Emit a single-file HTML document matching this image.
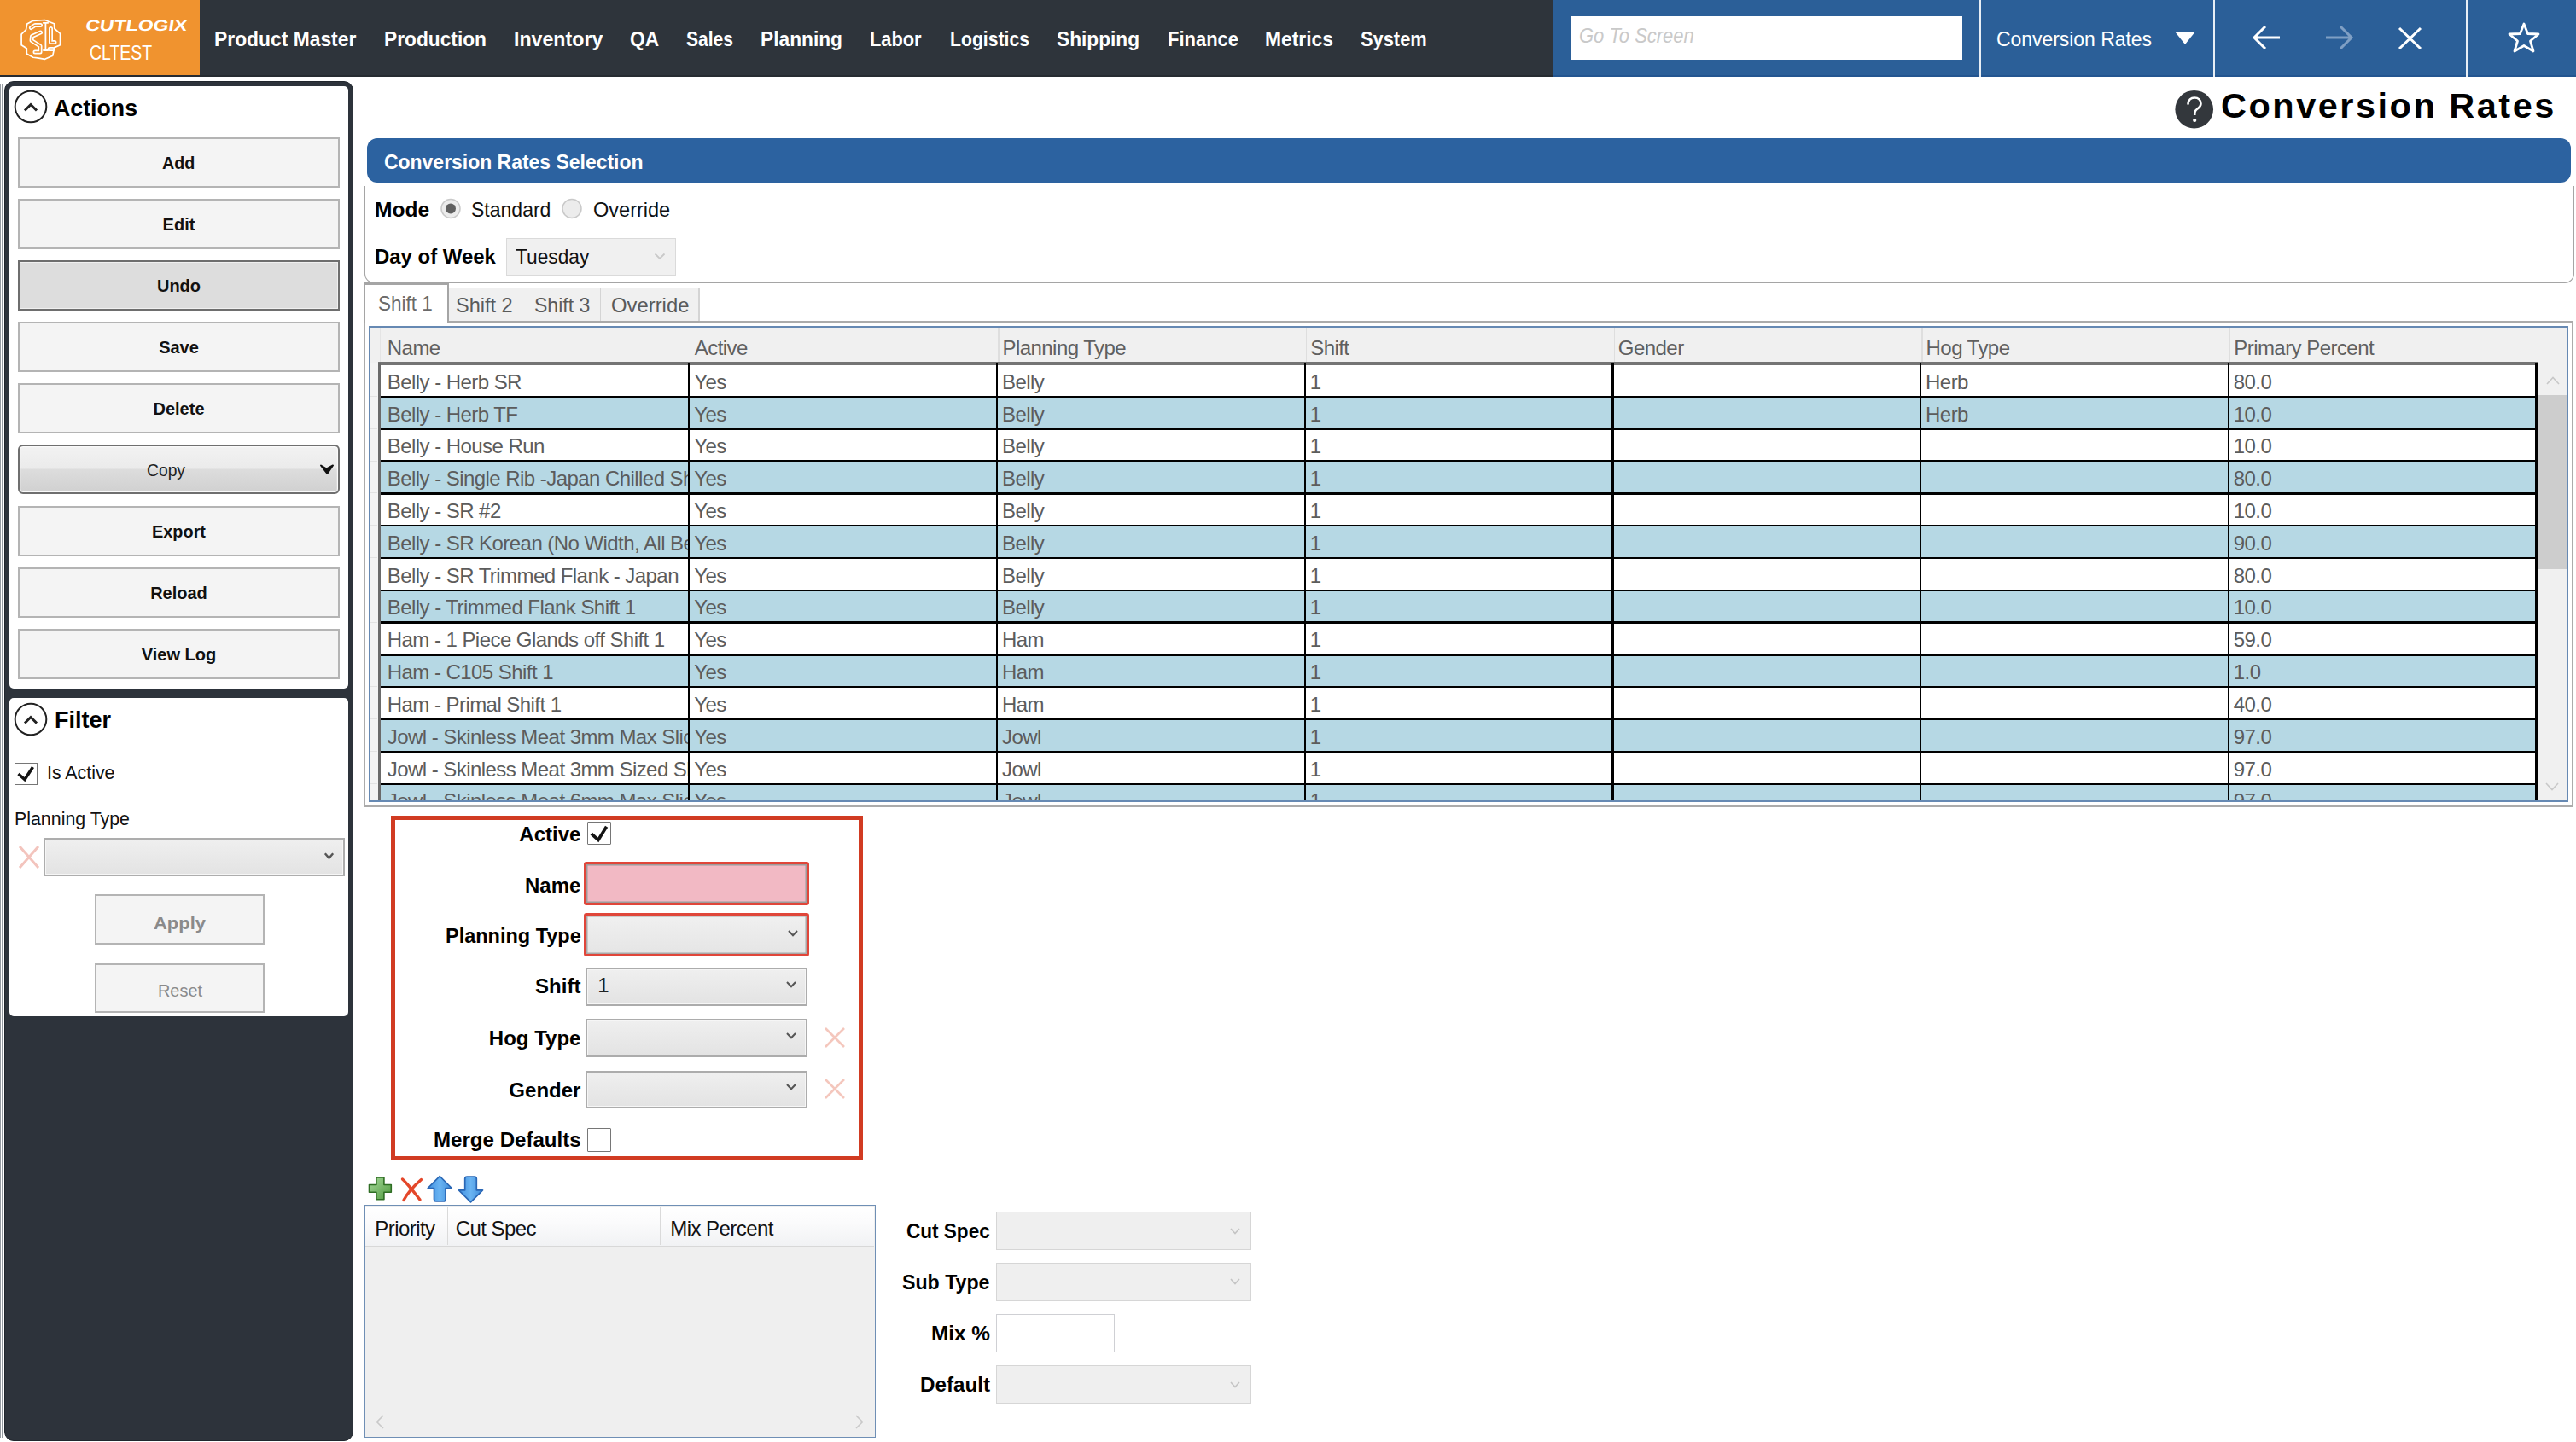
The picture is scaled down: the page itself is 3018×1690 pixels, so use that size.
<!DOCTYPE html><html><head><meta charset='utf-8'><title>Conversion Rates</title><style>
*{margin:0;padding:0;box-sizing:border-box}
html,body{width:3018px;height:1690px;overflow:hidden;background:#fff}
body{position:relative;font-family:'Liberation Sans',sans-serif}
body>div{position:absolute}
svg{position:absolute}
</style></head><body>
<div style="left:0px;top:0px;width:234px;height:90px;background:#f0932f"></div>
<div style="left:234px;top:0px;width:1586px;height:90px;background:#2e343b"></div>
<div style="left:1820px;top:0px;width:1198px;height:90px;background:#2b5f98"></div>
<div style="left:1820px;top:88px;width:1198px;height:2px;background:#235590"></div>
<div style="left:0px;top:88px;width:1820px;height:2px;background:#262b31"></div>
<div style="left:2319px;top:0px;width:2px;height:90px;background:#e8eef5"></div>
<div style="left:2593px;top:0px;width:2px;height:90px;background:#e8eef5"></div>
<div style="left:2889px;top:0px;width:2px;height:90px;background:#e8eef5"></div>
<svg style="left:0px;top:0px" width="80" height="80" fill="none" stroke-linejoin="round" stroke-linecap="round">
<path d="M52.6 23.5 L56.75 25.2 L63.4 27.7 L63.8 33.5 L70.5 39.3 L70.5 52.7 L63.8 55.6 L61.75 65.2 L52.6 69.3 L44 67.8 L38.8 67.25 L31.3 63.1 L31.3 56.8 L25.1 52.7 L25.1 40.2 L30.5 34.75 L31.75 28.1 L38.8 24.3 Z" stroke="#fff" stroke-width="1.7"/>
<path d="M53.4 27.5 V58.5 M50.8 26.8 H56.2 M51 59 H56" stroke="#fff" stroke-width="1.8"/>
<path d="M47.5 29.5 L41 29.5 L36.5 32.5 M47.5 38 L37.5 42.5 L37 47.5 L47 54 L47 61 L41 61" stroke="#fff" stroke-width="5"/>
<path d="M47.5 29.5 L41 29.5 L36.5 32.5 M47.5 38 L37.5 42.5 L37 47.5 L47 54 L47 61 L41 61" stroke="#f0932f" stroke-width="1.6"/>
<path d="M59.5 33.5 V49.5 H64 M58 57.5 H62" stroke="#fff" stroke-width="5"/>
<path d="M59.5 33.5 V49.5 H64 M58 57.5 H62" stroke="#f0932f" stroke-width="1.6"/>
</svg>
<div style="position:absolute;left:98.50px;top:20.96px;font-family:'Liberation Sans',sans-serif;font-size:18px;line-height:18px;font-weight:700;font-style:normal;color:#fff;white-space:pre;letter-spacing:0px;transform:scaleX(1.2796) skewX(-7deg);transform-origin:0 100%;-webkit-text-stroke:0px">CUTLOGIX</div>
<div style="position:absolute;left:104.80px;top:49.58px;font-family:'Liberation Sans',sans-serif;font-size:24px;line-height:24px;font-weight:400;font-style:normal;color:#fff;white-space:pre;letter-spacing:0px;transform:scaleX(0.8112);transform-origin:0 0;">CLTEST</div>
<div style="position:absolute;left:251.00px;top:33.98px;font-family:'Liberation Sans',sans-serif;font-size:24px;line-height:24px;font-weight:700;font-style:normal;color:#fff;white-space:pre;letter-spacing:0px;transform:scaleX(0.9519);transform-origin:0 0;">Product Master</div>
<div style="position:absolute;left:449.60px;top:33.98px;font-family:'Liberation Sans',sans-serif;font-size:24px;line-height:24px;font-weight:700;font-style:normal;color:#fff;white-space:pre;letter-spacing:0px;transform:scaleX(0.9474);transform-origin:0 0;">Production</div>
<div style="position:absolute;left:601.70px;top:33.98px;font-family:'Liberation Sans',sans-serif;font-size:24px;line-height:24px;font-weight:700;font-style:normal;color:#fff;white-space:pre;letter-spacing:0px;transform:scaleX(0.9655);transform-origin:0 0;">Inventory</div>
<div style="position:absolute;left:738.00px;top:33.98px;font-family:'Liberation Sans',sans-serif;font-size:24px;line-height:24px;font-weight:700;font-style:normal;color:#fff;white-space:pre;letter-spacing:0px;transform:scaleX(0.9444);transform-origin:0 0;">QA</div>
<div style="position:absolute;left:804.00px;top:33.98px;font-family:'Liberation Sans',sans-serif;font-size:24px;line-height:24px;font-weight:700;font-style:normal;color:#fff;white-space:pre;letter-spacing:0px;transform:scaleX(0.8769);transform-origin:0 0;">Sales</div>
<div style="position:absolute;left:891.00px;top:33.98px;font-family:'Liberation Sans',sans-serif;font-size:24px;line-height:24px;font-weight:700;font-style:normal;color:#fff;white-space:pre;letter-spacing:0px;transform:scaleX(0.9473);transform-origin:0 0;">Planning</div>
<div style="position:absolute;left:1019.40px;top:33.98px;font-family:'Liberation Sans',sans-serif;font-size:24px;line-height:24px;font-weight:700;font-style:normal;color:#fff;white-space:pre;letter-spacing:0px;transform:scaleX(0.9089);transform-origin:0 0;">Labor</div>
<div style="position:absolute;left:1113.00px;top:33.98px;font-family:'Liberation Sans',sans-serif;font-size:24px;line-height:24px;font-weight:700;font-style:normal;color:#fff;white-space:pre;letter-spacing:0px;transform:scaleX(0.8827);transform-origin:0 0;">Logistics</div>
<div style="position:absolute;left:1237.70px;top:33.98px;font-family:'Liberation Sans',sans-serif;font-size:24px;line-height:24px;font-weight:700;font-style:normal;color:#fff;white-space:pre;letter-spacing:0px;transform:scaleX(0.9449);transform-origin:0 0;">Shipping</div>
<div style="position:absolute;left:1367.50px;top:33.98px;font-family:'Liberation Sans',sans-serif;font-size:24px;line-height:24px;font-weight:700;font-style:normal;color:#fff;white-space:pre;letter-spacing:0px;transform:scaleX(0.9151);transform-origin:0 0;">Finance</div>
<div style="position:absolute;left:1482.00px;top:33.98px;font-family:'Liberation Sans',sans-serif;font-size:24px;line-height:24px;font-weight:700;font-style:normal;color:#fff;white-space:pre;letter-spacing:0px;transform:scaleX(0.9518);transform-origin:0 0;">Metrics</div>
<div style="position:absolute;left:1594.00px;top:33.98px;font-family:'Liberation Sans',sans-serif;font-size:24px;line-height:24px;font-weight:700;font-style:normal;color:#fff;white-space:pre;letter-spacing:0px;transform:scaleX(0.9099);transform-origin:0 0;">System</div>
<div style="left:1841px;top:19px;width:458px;height:51px;background:#fff"></div>
<div style="position:absolute;left:1850.00px;top:29.68px;font-family:'Liberation Sans',sans-serif;font-size:24px;line-height:24px;font-weight:400;font-style:italic;color:#c9c9c9;white-space:pre;letter-spacing:0px;transform:scaleX(0.9157);transform-origin:0 0;">Go To Screen</div>
<div style="position:absolute;left:2339.40px;top:33.98px;font-family:'Liberation Sans',sans-serif;font-size:24px;line-height:24px;font-weight:400;font-style:normal;color:#fff;white-space:pre;letter-spacing:0px;transform:scaleX(0.9541);transform-origin:0 0;">Conversion Rates</div>
<svg style="left:2546px;top:35px" width="28" height="20"><path d="M2 2 H26 L14 17 Z" fill="#fff"/></svg>
<svg style="left:2638px;top:28px" width="36" height="34" fill="none" stroke="#fff" stroke-width="3"><path d="M33 16 H4 M16 3 L3 16 L16 29"/></svg>
<svg style="left:2723px;top:28px" width="36" height="34" fill="none" stroke="#7f9fc4" stroke-width="3"><path d="M2 16 H31 M19 3 L32 16 L19 29"/></svg>
<svg style="left:2808px;top:30px" width="32" height="30" fill="none" stroke="#fff" stroke-width="3"><path d="M3 3 L28 27 M28 3 L3 27"/></svg>
<svg style="left:2938px;top:25px" width="40" height="38" fill="none" stroke="#fff" stroke-width="2.8" stroke-linejoin="round"><path d="M19 3 L23.5 14.5 L36 15 L26.5 23 L30 35 L19 28.5 L8 35 L11.5 23 L2 15 L14.5 14.5 Z"/></svg>
<div style="left:0px;top:99px;width:1.2px;height:1586px;background:#959ba1"></div>
<div style="left:2.4px;top:99px;width:1.2000000000000002px;height:1586px;background:#959ba1"></div>
<div style="left:4.8px;top:94.6px;width:409.2px;height:1594.4px;background:#2d333b;border:1.5px solid #20262d;border-radius:11px 11px 11px 11px"></div>
<div style="left:11px;top:101px;width:397px;height:706px;background:#fff;border-radius:5px"></div>
<div style="left:11px;top:818px;width:397px;height:373px;background:#fff;border-radius:5px"></div>
<svg style="left:15.5px;top:105px" width="40" height="40" fill="none" stroke="#222" ><circle cx="20" cy="20" r="18.3" stroke-width="2"/><path d="M13 24.5 L20 17.5 L27 24.5" stroke-width="3"/></svg>
<div style="position:absolute;left:63.00px;top:113.30px;font-family:'Liberation Sans',sans-serif;font-size:28px;line-height:28px;font-weight:700;font-style:normal;color:#000;white-space:pre;letter-spacing:0px;transform:scaleX(0.9544);transform-origin:0 0;">Actions</div>
<div style="left:21px;top:161px;width:377px;height:59px;border:2px solid #b4b4b4;background:#f4f4f4"></div>
<div style="position:absolute;left:190.30px;top:181.47px;font-family:'Liberation Sans',sans-serif;font-size:20px;line-height:20px;font-weight:700;font-style:normal;color:#111;white-space:pre;letter-spacing:0px;transform:scaleX(0.9874);transform-origin:0 0;">Add</div>
<div style="left:21px;top:233px;width:377px;height:59px;border:2px solid #b4b4b4;background:#f4f4f4"></div>
<div style="position:absolute;left:190.61px;top:253.47px;font-family:'Liberation Sans',sans-serif;font-size:20px;line-height:20px;font-weight:700;font-style:normal;color:#111;white-space:pre;letter-spacing:0px;">Edit</div>
<div style="left:21px;top:305px;width:377px;height:59px;border:2px solid #6e6e6e;background:#dddddd;box-shadow:inset 0 0 0 1px #f0f0f0"></div>
<div style="position:absolute;left:183.95px;top:325.47px;font-family:'Liberation Sans',sans-serif;font-size:20px;line-height:20px;font-weight:700;font-style:normal;color:#111;white-space:pre;letter-spacing:0px;">Undo</div>
<div style="left:21px;top:377px;width:377px;height:59px;border:2px solid #b4b4b4;background:#f4f4f4"></div>
<div style="position:absolute;left:186.14px;top:397.47px;font-family:'Liberation Sans',sans-serif;font-size:20px;line-height:20px;font-weight:700;font-style:normal;color:#111;white-space:pre;letter-spacing:0px;">Save</div>
<div style="left:21px;top:449px;width:377px;height:59px;border:2px solid #b4b4b4;background:#f4f4f4"></div>
<div style="position:absolute;left:179.48px;top:469.47px;font-family:'Liberation Sans',sans-serif;font-size:20px;line-height:20px;font-weight:700;font-style:normal;color:#111;white-space:pre;letter-spacing:0px;">Delete</div>
<div style="left:21px;top:521px;width:377px;height:58px;border:2px solid #6f6f6f;border-radius:6px;background:linear-gradient(#f2f2f2 0%,#ebebeb 48%,#dddddd 50%,#d0d0d0 100%);box-shadow:inset 0 0 0 1.2px #fafafa"></div>
<div style="position:absolute;left:171.50px;top:540.87px;font-family:'Liberation Sans',sans-serif;font-size:20px;line-height:20px;font-weight:400;font-style:normal;color:#222;white-space:pre;letter-spacing:0px;transform:scaleX(0.9635);transform-origin:0 0;">Copy</div>
<svg style="left:370px;top:540px" width="26" height="20"><path d="M6 5.5 L12.7 9.5 L20 5.5 L13.4 15 Z" fill="#111" stroke="#111" stroke-width="2" stroke-linejoin="round"/></svg>
<div style="left:21px;top:593px;width:377px;height:59px;border:2px solid #b4b4b4;background:#f4f4f4"></div>
<div style="position:absolute;left:178.00px;top:613.47px;font-family:'Liberation Sans',sans-serif;font-size:20px;line-height:20px;font-weight:700;font-style:normal;color:#111;white-space:pre;letter-spacing:0px;transform:scaleX(0.9946);transform-origin:0 0;">Export</div>
<div style="left:21px;top:665px;width:377px;height:59px;border:2px solid #b4b4b4;background:#f4f4f4"></div>
<div style="position:absolute;left:176.16px;top:685.47px;font-family:'Liberation Sans',sans-serif;font-size:20px;line-height:20px;font-weight:700;font-style:normal;color:#111;white-space:pre;letter-spacing:0px;">Reload</div>
<div style="left:21px;top:737px;width:377px;height:59px;border:2px solid #b4b4b4;background:#f4f4f4"></div>
<div style="position:absolute;left:165.79px;top:757.47px;font-family:'Liberation Sans',sans-serif;font-size:20px;line-height:20px;font-weight:700;font-style:normal;color:#111;white-space:pre;letter-spacing:0px;">View Log</div>
<svg style="left:15.5px;top:823px" width="40" height="40" fill="none" stroke="#222" ><circle cx="20" cy="20" r="18.3" stroke-width="2"/><path d="M13 24.5 L20 17.5 L27 24.5" stroke-width="3"/></svg>
<div style="position:absolute;left:64.00px;top:830.30px;font-family:'Liberation Sans',sans-serif;font-size:28px;line-height:28px;font-weight:700;font-style:normal;color:#000;white-space:pre;letter-spacing:0px;transform:scaleX(0.9639);transform-origin:0 0;">Filter</div>
<div style="left:16.6px;top:894px;width:27.4px;height:25.5px;border:1.8px solid #767676;background:#fff"></div>
<svg style="left:17px;top:894px" width="27" height="25"><path d="M4.5 13 L12 19.5 L21.5 5" fill="none" stroke="#141414" stroke-width="3.5"/></svg>
<div style="position:absolute;left:55.00px;top:895.08px;font-family:'Liberation Sans',sans-serif;font-size:22px;line-height:22px;font-weight:400;font-style:normal;color:#111;white-space:pre;letter-spacing:0px;transform:scaleX(0.9704);transform-origin:0 0;">Is Active</div>
<div style="position:absolute;left:17.00px;top:949.18px;font-family:'Liberation Sans',sans-serif;font-size:22px;line-height:22px;font-weight:400;font-style:normal;color:#111;white-space:pre;letter-spacing:0px;transform:scaleX(0.9709);transform-origin:0 0;">Planning Type</div>
<svg style="left:21px;top:990px" width="26" height="29" fill="none" stroke="#f3c4bd" stroke-width="3"><path d="M2 2 L24 27 M24 2 L2 27"/></svg>
<div style="left:51px;top:982px;width:353px;height:45px;border:2px solid #adadad;background:linear-gradient(#efefef,#e3e3e3);box-shadow:inset 0 0 0 1px #f6f6f6"></div>
<svg style="left:379px;top:998px" width="13" height="12"><path d="M1.8 2.2 L6.5 7.6 L11.2 2.2" fill="none" stroke="#565656" stroke-width="2.4"/></svg>
<div style="left:111px;top:1048px;width:199px;height:59px;border:2px solid #b4b4b4;background:#f4f4f4"></div>
<div style="position:absolute;left:180.00px;top:1071.57px;font-family:'Liberation Sans',sans-serif;font-size:20px;line-height:20px;font-weight:700;font-style:normal;color:#8a8a8a;white-space:pre;letter-spacing:0px;transform:scaleX(1.0979);transform-origin:0 0;">Apply</div>
<div style="left:111px;top:1128.7px;width:199px;height:58.299999999999955px;border:2px solid #b4b4b4;background:#f4f4f4"></div>
<div style="position:absolute;left:184.50px;top:1150.57px;font-family:'Liberation Sans',sans-serif;font-size:20px;line-height:20px;font-weight:400;font-style:normal;color:#8a8a8a;white-space:pre;letter-spacing:0px;transform:scaleX(0.9952);transform-origin:0 0;">Reset</div>
<svg style="left:2547px;top:105px" width="48" height="47"><circle cx="23.7" cy="23.2" r="22.3" fill="#33373c"/><path d="M16.5 17.5 C16.5 12 20 9.5 24 9.5 C28.5 9.5 31.5 12.5 31.5 16.5 C31.5 21 27 22 25 25 C24.3 26 24.2 27.5 24.2 30" fill="none" stroke="#fff" stroke-width="2.6"/><circle cx="24.2" cy="36" r="2.1" fill="#fff"/></svg>
<div style="position:absolute;left:2602.00px;top:103.17px;font-family:'Liberation Sans',sans-serif;font-size:41.5px;line-height:41.5px;font-weight:700;font-style:normal;color:#000;white-space:pre;letter-spacing:2.5px;">Conversion Rates</div>
<div style="left:430px;top:162px;width:2582px;height:52px;background:#2c62a0;border-radius:12px"></div>
<div style="position:absolute;left:450.30px;top:177.88px;font-family:'Liberation Sans',sans-serif;font-size:24px;line-height:24px;font-weight:700;font-style:normal;color:#fff;white-space:pre;letter-spacing:0px;transform:scaleX(0.9561);transform-origin:0 0;">Conversion Rates Selection</div>
<div style="left:426.5px;top:218px;width:2589.0px;height:113.5px;border:1.6px solid #a5a5a5;border-top:none;border-radius:0 0 11px 11px"></div>
<div style="position:absolute;left:439.40px;top:233.68px;font-family:'Liberation Sans',sans-serif;font-size:24px;line-height:24px;font-weight:700;font-style:normal;color:#000;white-space:pre;letter-spacing:0px;transform:scaleX(1.0244);transform-origin:0 0;">Mode</div>
<svg style="left:515px;top:232px" width="26" height="26"><circle cx="13" cy="12.5" r="11" fill="#ececec" stroke="#c9c9c9" stroke-width="1.5"/><circle cx="13" cy="12.5" r="6" fill="#606060"/></svg>
<div style="position:absolute;left:552.00px;top:233.68px;font-family:'Liberation Sans',sans-serif;font-size:24px;line-height:24px;font-weight:400;font-style:normal;color:#111;white-space:pre;letter-spacing:0px;transform:scaleX(0.9589);transform-origin:0 0;">Standard</div>
<svg style="left:657px;top:232px" width="26" height="26"><circle cx="13" cy="12.5" r="11" fill="#ececec" stroke="#c9c9c9" stroke-width="1.5"/></svg>
<div style="position:absolute;left:694.80px;top:233.68px;font-family:'Liberation Sans',sans-serif;font-size:24px;line-height:24px;font-weight:400;font-style:normal;color:#111;white-space:pre;letter-spacing:0px;transform:scaleX(0.9801);transform-origin:0 0;">Override</div>
<div style="position:absolute;left:439.40px;top:289.18px;font-family:'Liberation Sans',sans-serif;font-size:24px;line-height:24px;font-weight:700;font-style:normal;color:#000;white-space:pre;letter-spacing:0px;transform:scaleX(0.9966);transform-origin:0 0;">Day of Week</div>
<div style="left:592.5px;top:278.8px;width:199.10000000000002px;height:44.599999999999966px;background:#f0f0f0;border:1.5px solid #dadada"></div>
<div style="position:absolute;left:603.80px;top:289.18px;font-family:'Liberation Sans',sans-serif;font-size:24px;line-height:24px;font-weight:400;font-style:normal;color:#111;white-space:pre;letter-spacing:0px;transform:scaleX(0.9466);transform-origin:0 0;">Tuesday</div>
<svg style="left:765px;top:295px" width="16" height="11"><path d="M2.5 2.5 L8 8 L13.5 2.5" fill="none" stroke="#c9c9c9" stroke-width="1.8"/></svg>
<div style="left:426.4px;top:376px;width:2589.1px;height:569.6px;border:2px solid #ababab"></div>
<div style="left:525.5px;top:336.7px;width:86.29999999999995px;height:41.30000000000001px;background:#f0f0f0;border-top:1.6px solid #c9c9c9;border-bottom:2px solid #a9a9a9"></div>
<div style="left:610.5px;top:336.7px;width:2.599999999999909px;height:39.30000000000001px;background:#d4d4d4"></div>
<div style="position:absolute;left:533.70px;top:345.88px;font-family:'Liberation Sans',sans-serif;font-size:24px;line-height:24px;font-weight:400;font-style:normal;color:#5a5a5a;white-space:pre;letter-spacing:0px;transform:scaleX(0.9802);transform-origin:0 0;">Shift 2</div>
<div style="left:611.8px;top:336.7px;width:92.60000000000002px;height:41.30000000000001px;background:#f0f0f0;border-top:1.6px solid #c9c9c9;border-bottom:2px solid #a9a9a9"></div>
<div style="left:703.1px;top:336.7px;width:2.599999999999909px;height:39.30000000000001px;background:#d4d4d4"></div>
<div style="position:absolute;left:625.50px;top:345.88px;font-family:'Liberation Sans',sans-serif;font-size:24px;line-height:24px;font-weight:400;font-style:normal;color:#5a5a5a;white-space:pre;letter-spacing:0px;transform:scaleX(0.9596);transform-origin:0 0;">Shift 3</div>
<div style="left:704.4px;top:336.7px;width:114.39999999999998px;height:41.30000000000001px;background:#f0f0f0;border-top:1.6px solid #c9c9c9;border-bottom:2px solid #a9a9a9"></div>
<div style="left:817.5px;top:336.7px;width:2.599999999999909px;height:39.30000000000001px;background:#d4d4d4"></div>
<div style="position:absolute;left:715.60px;top:345.88px;font-family:'Liberation Sans',sans-serif;font-size:24px;line-height:24px;font-weight:400;font-style:normal;color:#5a5a5a;white-space:pre;letter-spacing:0px;transform:scaleX(0.9931);transform-origin:0 0;">Override</div>
<div style="left:426.4px;top:331.3px;width:100.0px;height:46.89999999999998px;background:#fff;border:2px solid #a5a5a5;border-bottom:none;border-top-width:3px"></div>
<div style="position:absolute;left:442.50px;top:343.98px;font-family:'Liberation Sans',sans-serif;font-size:24px;line-height:24px;font-weight:400;font-style:normal;color:#6a6a6a;white-space:pre;letter-spacing:0px;transform:scaleX(0.9361);transform-origin:0 0;">Shift 1</div>
<div style="left:432.3px;top:382px;width:2576.7px;height:558px;border:2px solid #6689b3;background:#fff"></div>
<div style="left:434.3px;top:384px;width:2572.7px;height:42px;background:#f0f0f0"></div>
<div style="left:444.5px;top:384px;width:1.5px;height:40px;background:#e4e4e4"></div>
<div style="position:absolute;left:453.80px;top:395.68px;font-family:'Liberation Sans',sans-serif;font-size:24px;line-height:24px;font-weight:400;font-style:normal;color:#606060;white-space:pre;letter-spacing:-0.55px;">Name</div>
<div style="position:absolute;left:813.80px;top:395.68px;font-family:'Liberation Sans',sans-serif;font-size:24px;line-height:24px;font-weight:400;font-style:normal;color:#606060;white-space:pre;letter-spacing:-0.55px;">Active</div>
<div style="left:808.5px;top:384px;width:1.3999999999999773px;height:40px;background:#dedede"></div>
<div style="position:absolute;left:1174.49px;top:395.68px;font-family:'Liberation Sans',sans-serif;font-size:24px;line-height:24px;font-weight:400;font-style:normal;color:#606060;white-space:pre;letter-spacing:-0.55px;">Planning Type</div>
<div style="left:1169.19px;top:384px;width:1.3999999999998636px;height:40px;background:#dedede"></div>
<div style="position:absolute;left:1535.18px;top:395.68px;font-family:'Liberation Sans',sans-serif;font-size:24px;line-height:24px;font-weight:400;font-style:normal;color:#606060;white-space:pre;letter-spacing:-0.55px;">Shift</div>
<div style="left:1529.8799999999999px;top:384px;width:1.3999999999998636px;height:40px;background:#dedede"></div>
<div style="position:absolute;left:1895.87px;top:395.68px;font-family:'Liberation Sans',sans-serif;font-size:24px;line-height:24px;font-weight:400;font-style:normal;color:#606060;white-space:pre;letter-spacing:-0.55px;">Gender</div>
<div style="left:1890.57px;top:384px;width:1.3999999999998636px;height:40px;background:#dedede"></div>
<div style="position:absolute;left:2256.56px;top:395.68px;font-family:'Liberation Sans',sans-serif;font-size:24px;line-height:24px;font-weight:400;font-style:normal;color:#606060;white-space:pre;letter-spacing:-0.55px;">Hog Type</div>
<div style="left:2251.2599999999998px;top:384px;width:1.400000000000091px;height:40px;background:#dedede"></div>
<div style="position:absolute;left:2617.25px;top:395.68px;font-family:'Liberation Sans',sans-serif;font-size:24px;line-height:24px;font-weight:400;font-style:normal;color:#606060;white-space:pre;letter-spacing:-0.55px;">Primary Percent</div>
<div style="left:2611.95px;top:384px;width:1.400000000000091px;height:40px;background:#dedede"></div>
<div style="left:434.3px;top:426px;width:8.699999999999989px;height:512px;background:#f3f3f3"></div>
<div style="left:2972.6px;top:426px;width:34.40000000000009px;height:512px;background:#f0f0f0"></div>
<div style="left:2974px;top:462.5px;width:32.5px;height:204.5px;background:#cdcdcd"></div>
<svg style="left:2982px;top:439px" width="18" height="14"><path d="M2 11 L9 3.5 L16 11" fill="none" stroke="#c8c8c8" stroke-width="1.6"/></svg>
<svg style="left:2981px;top:915px" width="18" height="14"><path d="M2 3 L9 10.5 L16 3" fill="none" stroke="#c8c8c8" stroke-width="1.6"/></svg>
<div style="left:434.3px;top:384px;width:2539.1px;height:554px;overflow:hidden"><div style="position:absolute;left:10.10px;top:41.75px;width:2527.04px;height:39.15px;background:#fff"></div><div style="position:absolute;left:0px;top:79.90px;width:8.10px;height:1px;background:#e2e2e2"></div><div style="position:absolute;left:10.10px;top:80.90px;width:2527.04px;height:37.82px;background:#b6d8e4"></div><div style="position:absolute;left:0px;top:117.72px;width:8.10px;height:1px;background:#e2e2e2"></div><div style="position:absolute;left:10.10px;top:118.72px;width:2527.04px;height:37.82px;background:#fff"></div><div style="position:absolute;left:0px;top:155.54px;width:8.10px;height:1px;background:#e2e2e2"></div><div style="position:absolute;left:10.10px;top:156.54px;width:2527.04px;height:37.82px;background:#b6d8e4"></div><div style="position:absolute;left:0px;top:193.36px;width:8.10px;height:1px;background:#e2e2e2"></div><div style="position:absolute;left:10.10px;top:194.36px;width:2527.04px;height:37.82px;background:#fff"></div><div style="position:absolute;left:0px;top:231.18px;width:8.10px;height:1px;background:#e2e2e2"></div><div style="position:absolute;left:10.10px;top:232.18px;width:2527.04px;height:37.82px;background:#b6d8e4"></div><div style="position:absolute;left:0px;top:269.00px;width:8.10px;height:1px;background:#e2e2e2"></div><div style="position:absolute;left:10.10px;top:270.00px;width:2527.04px;height:37.82px;background:#fff"></div><div style="position:absolute;left:0px;top:306.82px;width:8.10px;height:1px;background:#e2e2e2"></div><div style="position:absolute;left:10.10px;top:307.82px;width:2527.04px;height:37.82px;background:#b6d8e4"></div><div style="position:absolute;left:0px;top:344.64px;width:8.10px;height:1px;background:#e2e2e2"></div><div style="position:absolute;left:10.10px;top:345.64px;width:2527.04px;height:37.82px;background:#fff"></div><div style="position:absolute;left:0px;top:382.46px;width:8.10px;height:1px;background:#e2e2e2"></div><div style="position:absolute;left:10.10px;top:383.46px;width:2527.04px;height:37.82px;background:#b6d8e4"></div><div style="position:absolute;left:0px;top:420.28px;width:8.10px;height:1px;background:#e2e2e2"></div><div style="position:absolute;left:10.10px;top:421.28px;width:2527.04px;height:37.82px;background:#fff"></div><div style="position:absolute;left:0px;top:458.10px;width:8.10px;height:1px;background:#e2e2e2"></div><div style="position:absolute;left:10.10px;top:459.10px;width:2527.04px;height:37.82px;background:#b6d8e4"></div><div style="position:absolute;left:0px;top:495.92px;width:8.10px;height:1px;background:#e2e2e2"></div><div style="position:absolute;left:10.10px;top:496.92px;width:2527.04px;height:37.82px;background:#fff"></div><div style="position:absolute;left:0px;top:533.74px;width:8.10px;height:1px;background:#e2e2e2"></div><div style="position:absolute;left:10.10px;top:534.74px;width:2527.04px;height:37.82px;background:#b6d8e4"></div><div style="position:absolute;left:0px;top:571.56px;width:8.10px;height:1px;background:#e2e2e2"></div><div style="position:absolute;left:8.60px;top:40.00px;width:2529.74px;height:3.5px;background:#747474"></div><div style="position:absolute;left:8.60px;top:79.75px;width:2529.74px;height:2.3px;background:#000"></div><div style="position:absolute;left:8.60px;top:117.57px;width:2529.74px;height:2.3px;background:#000"></div><div style="position:absolute;left:8.60px;top:155.39px;width:2529.74px;height:2.3px;background:#000"></div><div style="position:absolute;left:8.60px;top:193.21px;width:2529.74px;height:2.3px;background:#000"></div><div style="position:absolute;left:8.60px;top:231.03px;width:2529.74px;height:2.3px;background:#000"></div><div style="position:absolute;left:8.60px;top:268.85px;width:2529.74px;height:2.3px;background:#000"></div><div style="position:absolute;left:8.60px;top:306.67px;width:2529.74px;height:2.3px;background:#000"></div><div style="position:absolute;left:8.60px;top:344.49px;width:2529.74px;height:2.3px;background:#000"></div><div style="position:absolute;left:8.60px;top:382.31px;width:2529.74px;height:2.3px;background:#000"></div><div style="position:absolute;left:8.60px;top:420.13px;width:2529.74px;height:2.3px;background:#000"></div><div style="position:absolute;left:8.60px;top:457.95px;width:2529.74px;height:2.3px;background:#000"></div><div style="position:absolute;left:8.60px;top:495.77px;width:2529.74px;height:2.3px;background:#000"></div><div style="position:absolute;left:8.60px;top:533.59px;width:2529.74px;height:2.3px;background:#000"></div><div style="position:absolute;left:8.60px;top:571.41px;width:2529.74px;height:2.3px;background:#000"></div><div style="position:absolute;left:8.50px;top:41.75px;width:3.2px;height:600px;background:#6a6a6a"></div><div style="position:absolute;left:371.85px;top:41.75px;width:2.3px;height:600px;background:#000"></div><div style="position:absolute;left:732.54px;top:41.75px;width:2.3px;height:600px;background:#000"></div><div style="position:absolute;left:1093.23px;top:41.75px;width:2.3px;height:600px;background:#000"></div><div style="position:absolute;left:1453.92px;top:41.75px;width:2.3px;height:600px;background:#000"></div><div style="position:absolute;left:1814.61px;top:41.75px;width:2.3px;height:600px;background:#000"></div><div style="position:absolute;left:2175.30px;top:41.75px;width:2.3px;height:600px;background:#000"></div><div style="position:absolute;left:2535.99px;top:41.75px;width:2.3px;height:600px;background:#000"></div></div>
<div style="left:445.59999999999997px;top:426px;width:360.50px;height:512.00px;overflow:hidden"><div style="position:absolute;left:8.20px;top:9.68px;font-family:'Liberation Sans',sans-serif;font-size:24px;line-height:24px;font-weight:400;font-style:normal;color:#5c5c5c;white-space:pre;letter-spacing:-0.55px;">Belly - Herb SR</div></div>
<div style="left:808.5px;top:426px;width:358.29px;height:512.00px;overflow:hidden"><div style="position:absolute;left:4.80px;top:9.68px;font-family:'Liberation Sans',sans-serif;font-size:24px;line-height:24px;font-weight:400;font-style:normal;color:#5c5c5c;white-space:pre;letter-spacing:-0.55px;">Yes</div></div>
<div style="left:1169.19px;top:426px;width:358.29px;height:512.00px;overflow:hidden"><div style="position:absolute;left:4.80px;top:9.68px;font-family:'Liberation Sans',sans-serif;font-size:24px;line-height:24px;font-weight:400;font-style:normal;color:#5c5c5c;white-space:pre;letter-spacing:-0.55px;">Belly</div></div>
<div style="left:1529.8799999999999px;top:426px;width:358.29px;height:512.00px;overflow:hidden"><div style="position:absolute;left:4.80px;top:9.68px;font-family:'Liberation Sans',sans-serif;font-size:24px;line-height:24px;font-weight:400;font-style:normal;color:#5c5c5c;white-space:pre;letter-spacing:-0.55px;">1</div></div>
<div style="left:2251.2599999999998px;top:426px;width:358.29px;height:512.00px;overflow:hidden"><div style="position:absolute;left:4.80px;top:9.68px;font-family:'Liberation Sans',sans-serif;font-size:24px;line-height:24px;font-weight:400;font-style:normal;color:#5c5c5c;white-space:pre;letter-spacing:-0.55px;">Herb</div></div>
<div style="left:2611.95px;top:426px;width:358.29px;height:512.00px;overflow:hidden"><div style="position:absolute;left:4.80px;top:9.68px;font-family:'Liberation Sans',sans-serif;font-size:24px;line-height:24px;font-weight:400;font-style:normal;color:#5c5c5c;white-space:pre;letter-spacing:-0.55px;">80.0</div></div>
<div style="left:445.59999999999997px;top:426px;width:360.50px;height:512.00px;overflow:hidden"><div style="position:absolute;left:8.20px;top:47.50px;font-family:'Liberation Sans',sans-serif;font-size:24px;line-height:24px;font-weight:400;font-style:normal;color:#5c5c5c;white-space:pre;letter-spacing:-0.55px;">Belly - Herb TF</div></div>
<div style="left:808.5px;top:426px;width:358.29px;height:512.00px;overflow:hidden"><div style="position:absolute;left:4.80px;top:47.50px;font-family:'Liberation Sans',sans-serif;font-size:24px;line-height:24px;font-weight:400;font-style:normal;color:#5c5c5c;white-space:pre;letter-spacing:-0.55px;">Yes</div></div>
<div style="left:1169.19px;top:426px;width:358.29px;height:512.00px;overflow:hidden"><div style="position:absolute;left:4.80px;top:47.50px;font-family:'Liberation Sans',sans-serif;font-size:24px;line-height:24px;font-weight:400;font-style:normal;color:#5c5c5c;white-space:pre;letter-spacing:-0.55px;">Belly</div></div>
<div style="left:1529.8799999999999px;top:426px;width:358.29px;height:512.00px;overflow:hidden"><div style="position:absolute;left:4.80px;top:47.50px;font-family:'Liberation Sans',sans-serif;font-size:24px;line-height:24px;font-weight:400;font-style:normal;color:#5c5c5c;white-space:pre;letter-spacing:-0.55px;">1</div></div>
<div style="left:2251.2599999999998px;top:426px;width:358.29px;height:512.00px;overflow:hidden"><div style="position:absolute;left:4.80px;top:47.50px;font-family:'Liberation Sans',sans-serif;font-size:24px;line-height:24px;font-weight:400;font-style:normal;color:#5c5c5c;white-space:pre;letter-spacing:-0.55px;">Herb</div></div>
<div style="left:2611.95px;top:426px;width:358.29px;height:512.00px;overflow:hidden"><div style="position:absolute;left:4.80px;top:47.50px;font-family:'Liberation Sans',sans-serif;font-size:24px;line-height:24px;font-weight:400;font-style:normal;color:#5c5c5c;white-space:pre;letter-spacing:-0.55px;">10.0</div></div>
<div style="left:445.59999999999997px;top:426px;width:360.50px;height:512.00px;overflow:hidden"><div style="position:absolute;left:8.20px;top:85.32px;font-family:'Liberation Sans',sans-serif;font-size:24px;line-height:24px;font-weight:400;font-style:normal;color:#5c5c5c;white-space:pre;letter-spacing:-0.55px;">Belly - House Run</div></div>
<div style="left:808.5px;top:426px;width:358.29px;height:512.00px;overflow:hidden"><div style="position:absolute;left:4.80px;top:85.32px;font-family:'Liberation Sans',sans-serif;font-size:24px;line-height:24px;font-weight:400;font-style:normal;color:#5c5c5c;white-space:pre;letter-spacing:-0.55px;">Yes</div></div>
<div style="left:1169.19px;top:426px;width:358.29px;height:512.00px;overflow:hidden"><div style="position:absolute;left:4.80px;top:85.32px;font-family:'Liberation Sans',sans-serif;font-size:24px;line-height:24px;font-weight:400;font-style:normal;color:#5c5c5c;white-space:pre;letter-spacing:-0.55px;">Belly</div></div>
<div style="left:1529.8799999999999px;top:426px;width:358.29px;height:512.00px;overflow:hidden"><div style="position:absolute;left:4.80px;top:85.32px;font-family:'Liberation Sans',sans-serif;font-size:24px;line-height:24px;font-weight:400;font-style:normal;color:#5c5c5c;white-space:pre;letter-spacing:-0.55px;">1</div></div>
<div style="left:2611.95px;top:426px;width:358.29px;height:512.00px;overflow:hidden"><div style="position:absolute;left:4.80px;top:85.32px;font-family:'Liberation Sans',sans-serif;font-size:24px;line-height:24px;font-weight:400;font-style:normal;color:#5c5c5c;white-space:pre;letter-spacing:-0.55px;">10.0</div></div>
<div style="left:445.59999999999997px;top:426px;width:360.50px;height:512.00px;overflow:hidden"><div style="position:absolute;left:8.20px;top:123.14px;font-family:'Liberation Sans',sans-serif;font-size:24px;line-height:24px;font-weight:400;font-style:normal;color:#5c5c5c;white-space:pre;letter-spacing:-0.55px;">Belly - Single Rib -Japan Chilled Shift 1</div></div>
<div style="left:808.5px;top:426px;width:358.29px;height:512.00px;overflow:hidden"><div style="position:absolute;left:4.80px;top:123.14px;font-family:'Liberation Sans',sans-serif;font-size:24px;line-height:24px;font-weight:400;font-style:normal;color:#5c5c5c;white-space:pre;letter-spacing:-0.55px;">Yes</div></div>
<div style="left:1169.19px;top:426px;width:358.29px;height:512.00px;overflow:hidden"><div style="position:absolute;left:4.80px;top:123.14px;font-family:'Liberation Sans',sans-serif;font-size:24px;line-height:24px;font-weight:400;font-style:normal;color:#5c5c5c;white-space:pre;letter-spacing:-0.55px;">Belly</div></div>
<div style="left:1529.8799999999999px;top:426px;width:358.29px;height:512.00px;overflow:hidden"><div style="position:absolute;left:4.80px;top:123.14px;font-family:'Liberation Sans',sans-serif;font-size:24px;line-height:24px;font-weight:400;font-style:normal;color:#5c5c5c;white-space:pre;letter-spacing:-0.55px;">1</div></div>
<div style="left:2611.95px;top:426px;width:358.29px;height:512.00px;overflow:hidden"><div style="position:absolute;left:4.80px;top:123.14px;font-family:'Liberation Sans',sans-serif;font-size:24px;line-height:24px;font-weight:400;font-style:normal;color:#5c5c5c;white-space:pre;letter-spacing:-0.55px;">80.0</div></div>
<div style="left:445.59999999999997px;top:426px;width:360.50px;height:512.00px;overflow:hidden"><div style="position:absolute;left:8.20px;top:160.96px;font-family:'Liberation Sans',sans-serif;font-size:24px;line-height:24px;font-weight:400;font-style:normal;color:#5c5c5c;white-space:pre;letter-spacing:-0.55px;">Belly - SR #2</div></div>
<div style="left:808.5px;top:426px;width:358.29px;height:512.00px;overflow:hidden"><div style="position:absolute;left:4.80px;top:160.96px;font-family:'Liberation Sans',sans-serif;font-size:24px;line-height:24px;font-weight:400;font-style:normal;color:#5c5c5c;white-space:pre;letter-spacing:-0.55px;">Yes</div></div>
<div style="left:1169.19px;top:426px;width:358.29px;height:512.00px;overflow:hidden"><div style="position:absolute;left:4.80px;top:160.96px;font-family:'Liberation Sans',sans-serif;font-size:24px;line-height:24px;font-weight:400;font-style:normal;color:#5c5c5c;white-space:pre;letter-spacing:-0.55px;">Belly</div></div>
<div style="left:1529.8799999999999px;top:426px;width:358.29px;height:512.00px;overflow:hidden"><div style="position:absolute;left:4.80px;top:160.96px;font-family:'Liberation Sans',sans-serif;font-size:24px;line-height:24px;font-weight:400;font-style:normal;color:#5c5c5c;white-space:pre;letter-spacing:-0.55px;">1</div></div>
<div style="left:2611.95px;top:426px;width:358.29px;height:512.00px;overflow:hidden"><div style="position:absolute;left:4.80px;top:160.96px;font-family:'Liberation Sans',sans-serif;font-size:24px;line-height:24px;font-weight:400;font-style:normal;color:#5c5c5c;white-space:pre;letter-spacing:-0.55px;">10.0</div></div>
<div style="left:445.59999999999997px;top:426px;width:360.50px;height:512.00px;overflow:hidden"><div style="position:absolute;left:8.20px;top:198.78px;font-family:'Liberation Sans',sans-serif;font-size:24px;line-height:24px;font-weight:400;font-style:normal;color:#5c5c5c;white-space:pre;letter-spacing:-0.55px;">Belly - SR Korean (No Width, All Bellies)</div></div>
<div style="left:808.5px;top:426px;width:358.29px;height:512.00px;overflow:hidden"><div style="position:absolute;left:4.80px;top:198.78px;font-family:'Liberation Sans',sans-serif;font-size:24px;line-height:24px;font-weight:400;font-style:normal;color:#5c5c5c;white-space:pre;letter-spacing:-0.55px;">Yes</div></div>
<div style="left:1169.19px;top:426px;width:358.29px;height:512.00px;overflow:hidden"><div style="position:absolute;left:4.80px;top:198.78px;font-family:'Liberation Sans',sans-serif;font-size:24px;line-height:24px;font-weight:400;font-style:normal;color:#5c5c5c;white-space:pre;letter-spacing:-0.55px;">Belly</div></div>
<div style="left:1529.8799999999999px;top:426px;width:358.29px;height:512.00px;overflow:hidden"><div style="position:absolute;left:4.80px;top:198.78px;font-family:'Liberation Sans',sans-serif;font-size:24px;line-height:24px;font-weight:400;font-style:normal;color:#5c5c5c;white-space:pre;letter-spacing:-0.55px;">1</div></div>
<div style="left:2611.95px;top:426px;width:358.29px;height:512.00px;overflow:hidden"><div style="position:absolute;left:4.80px;top:198.78px;font-family:'Liberation Sans',sans-serif;font-size:24px;line-height:24px;font-weight:400;font-style:normal;color:#5c5c5c;white-space:pre;letter-spacing:-0.55px;">90.0</div></div>
<div style="left:445.59999999999997px;top:426px;width:360.50px;height:512.00px;overflow:hidden"><div style="position:absolute;left:8.20px;top:236.60px;font-family:'Liberation Sans',sans-serif;font-size:24px;line-height:24px;font-weight:400;font-style:normal;color:#5c5c5c;white-space:pre;letter-spacing:-0.55px;">Belly - SR Trimmed Flank - Japan</div></div>
<div style="left:808.5px;top:426px;width:358.29px;height:512.00px;overflow:hidden"><div style="position:absolute;left:4.80px;top:236.60px;font-family:'Liberation Sans',sans-serif;font-size:24px;line-height:24px;font-weight:400;font-style:normal;color:#5c5c5c;white-space:pre;letter-spacing:-0.55px;">Yes</div></div>
<div style="left:1169.19px;top:426px;width:358.29px;height:512.00px;overflow:hidden"><div style="position:absolute;left:4.80px;top:236.60px;font-family:'Liberation Sans',sans-serif;font-size:24px;line-height:24px;font-weight:400;font-style:normal;color:#5c5c5c;white-space:pre;letter-spacing:-0.55px;">Belly</div></div>
<div style="left:1529.8799999999999px;top:426px;width:358.29px;height:512.00px;overflow:hidden"><div style="position:absolute;left:4.80px;top:236.60px;font-family:'Liberation Sans',sans-serif;font-size:24px;line-height:24px;font-weight:400;font-style:normal;color:#5c5c5c;white-space:pre;letter-spacing:-0.55px;">1</div></div>
<div style="left:2611.95px;top:426px;width:358.29px;height:512.00px;overflow:hidden"><div style="position:absolute;left:4.80px;top:236.60px;font-family:'Liberation Sans',sans-serif;font-size:24px;line-height:24px;font-weight:400;font-style:normal;color:#5c5c5c;white-space:pre;letter-spacing:-0.55px;">80.0</div></div>
<div style="left:445.59999999999997px;top:426px;width:360.50px;height:512.00px;overflow:hidden"><div style="position:absolute;left:8.20px;top:274.42px;font-family:'Liberation Sans',sans-serif;font-size:24px;line-height:24px;font-weight:400;font-style:normal;color:#5c5c5c;white-space:pre;letter-spacing:-0.55px;">Belly - Trimmed Flank Shift 1</div></div>
<div style="left:808.5px;top:426px;width:358.29px;height:512.00px;overflow:hidden"><div style="position:absolute;left:4.80px;top:274.42px;font-family:'Liberation Sans',sans-serif;font-size:24px;line-height:24px;font-weight:400;font-style:normal;color:#5c5c5c;white-space:pre;letter-spacing:-0.55px;">Yes</div></div>
<div style="left:1169.19px;top:426px;width:358.29px;height:512.00px;overflow:hidden"><div style="position:absolute;left:4.80px;top:274.42px;font-family:'Liberation Sans',sans-serif;font-size:24px;line-height:24px;font-weight:400;font-style:normal;color:#5c5c5c;white-space:pre;letter-spacing:-0.55px;">Belly</div></div>
<div style="left:1529.8799999999999px;top:426px;width:358.29px;height:512.00px;overflow:hidden"><div style="position:absolute;left:4.80px;top:274.42px;font-family:'Liberation Sans',sans-serif;font-size:24px;line-height:24px;font-weight:400;font-style:normal;color:#5c5c5c;white-space:pre;letter-spacing:-0.55px;">1</div></div>
<div style="left:2611.95px;top:426px;width:358.29px;height:512.00px;overflow:hidden"><div style="position:absolute;left:4.80px;top:274.42px;font-family:'Liberation Sans',sans-serif;font-size:24px;line-height:24px;font-weight:400;font-style:normal;color:#5c5c5c;white-space:pre;letter-spacing:-0.55px;">10.0</div></div>
<div style="left:445.59999999999997px;top:426px;width:360.50px;height:512.00px;overflow:hidden"><div style="position:absolute;left:8.20px;top:312.24px;font-family:'Liberation Sans',sans-serif;font-size:24px;line-height:24px;font-weight:400;font-style:normal;color:#5c5c5c;white-space:pre;letter-spacing:-0.55px;">Ham - 1 Piece Glands off Shift 1</div></div>
<div style="left:808.5px;top:426px;width:358.29px;height:512.00px;overflow:hidden"><div style="position:absolute;left:4.80px;top:312.24px;font-family:'Liberation Sans',sans-serif;font-size:24px;line-height:24px;font-weight:400;font-style:normal;color:#5c5c5c;white-space:pre;letter-spacing:-0.55px;">Yes</div></div>
<div style="left:1169.19px;top:426px;width:358.29px;height:512.00px;overflow:hidden"><div style="position:absolute;left:4.80px;top:312.24px;font-family:'Liberation Sans',sans-serif;font-size:24px;line-height:24px;font-weight:400;font-style:normal;color:#5c5c5c;white-space:pre;letter-spacing:-0.55px;">Ham</div></div>
<div style="left:1529.8799999999999px;top:426px;width:358.29px;height:512.00px;overflow:hidden"><div style="position:absolute;left:4.80px;top:312.24px;font-family:'Liberation Sans',sans-serif;font-size:24px;line-height:24px;font-weight:400;font-style:normal;color:#5c5c5c;white-space:pre;letter-spacing:-0.55px;">1</div></div>
<div style="left:2611.95px;top:426px;width:358.29px;height:512.00px;overflow:hidden"><div style="position:absolute;left:4.80px;top:312.24px;font-family:'Liberation Sans',sans-serif;font-size:24px;line-height:24px;font-weight:400;font-style:normal;color:#5c5c5c;white-space:pre;letter-spacing:-0.55px;">59.0</div></div>
<div style="left:445.59999999999997px;top:426px;width:360.50px;height:512.00px;overflow:hidden"><div style="position:absolute;left:8.20px;top:350.06px;font-family:'Liberation Sans',sans-serif;font-size:24px;line-height:24px;font-weight:400;font-style:normal;color:#5c5c5c;white-space:pre;letter-spacing:-0.55px;">Ham - C105 Shift 1</div></div>
<div style="left:808.5px;top:426px;width:358.29px;height:512.00px;overflow:hidden"><div style="position:absolute;left:4.80px;top:350.06px;font-family:'Liberation Sans',sans-serif;font-size:24px;line-height:24px;font-weight:400;font-style:normal;color:#5c5c5c;white-space:pre;letter-spacing:-0.55px;">Yes</div></div>
<div style="left:1169.19px;top:426px;width:358.29px;height:512.00px;overflow:hidden"><div style="position:absolute;left:4.80px;top:350.06px;font-family:'Liberation Sans',sans-serif;font-size:24px;line-height:24px;font-weight:400;font-style:normal;color:#5c5c5c;white-space:pre;letter-spacing:-0.55px;">Ham</div></div>
<div style="left:1529.8799999999999px;top:426px;width:358.29px;height:512.00px;overflow:hidden"><div style="position:absolute;left:4.80px;top:350.06px;font-family:'Liberation Sans',sans-serif;font-size:24px;line-height:24px;font-weight:400;font-style:normal;color:#5c5c5c;white-space:pre;letter-spacing:-0.55px;">1</div></div>
<div style="left:2611.95px;top:426px;width:358.29px;height:512.00px;overflow:hidden"><div style="position:absolute;left:4.80px;top:350.06px;font-family:'Liberation Sans',sans-serif;font-size:24px;line-height:24px;font-weight:400;font-style:normal;color:#5c5c5c;white-space:pre;letter-spacing:-0.55px;">1.0</div></div>
<div style="left:445.59999999999997px;top:426px;width:360.50px;height:512.00px;overflow:hidden"><div style="position:absolute;left:8.20px;top:387.88px;font-family:'Liberation Sans',sans-serif;font-size:24px;line-height:24px;font-weight:400;font-style:normal;color:#5c5c5c;white-space:pre;letter-spacing:-0.55px;">Ham - Primal Shift 1</div></div>
<div style="left:808.5px;top:426px;width:358.29px;height:512.00px;overflow:hidden"><div style="position:absolute;left:4.80px;top:387.88px;font-family:'Liberation Sans',sans-serif;font-size:24px;line-height:24px;font-weight:400;font-style:normal;color:#5c5c5c;white-space:pre;letter-spacing:-0.55px;">Yes</div></div>
<div style="left:1169.19px;top:426px;width:358.29px;height:512.00px;overflow:hidden"><div style="position:absolute;left:4.80px;top:387.88px;font-family:'Liberation Sans',sans-serif;font-size:24px;line-height:24px;font-weight:400;font-style:normal;color:#5c5c5c;white-space:pre;letter-spacing:-0.55px;">Ham</div></div>
<div style="left:1529.8799999999999px;top:426px;width:358.29px;height:512.00px;overflow:hidden"><div style="position:absolute;left:4.80px;top:387.88px;font-family:'Liberation Sans',sans-serif;font-size:24px;line-height:24px;font-weight:400;font-style:normal;color:#5c5c5c;white-space:pre;letter-spacing:-0.55px;">1</div></div>
<div style="left:2611.95px;top:426px;width:358.29px;height:512.00px;overflow:hidden"><div style="position:absolute;left:4.80px;top:387.88px;font-family:'Liberation Sans',sans-serif;font-size:24px;line-height:24px;font-weight:400;font-style:normal;color:#5c5c5c;white-space:pre;letter-spacing:-0.55px;">40.0</div></div>
<div style="left:445.59999999999997px;top:426px;width:360.50px;height:512.00px;overflow:hidden"><div style="position:absolute;left:8.20px;top:425.70px;font-family:'Liberation Sans',sans-serif;font-size:24px;line-height:24px;font-weight:400;font-style:normal;color:#5c5c5c;white-space:pre;letter-spacing:-0.55px;">Jowl - Skinless Meat 3mm Max Slices</div></div>
<div style="left:808.5px;top:426px;width:358.29px;height:512.00px;overflow:hidden"><div style="position:absolute;left:4.80px;top:425.70px;font-family:'Liberation Sans',sans-serif;font-size:24px;line-height:24px;font-weight:400;font-style:normal;color:#5c5c5c;white-space:pre;letter-spacing:-0.55px;">Yes</div></div>
<div style="left:1169.19px;top:426px;width:358.29px;height:512.00px;overflow:hidden"><div style="position:absolute;left:4.80px;top:425.70px;font-family:'Liberation Sans',sans-serif;font-size:24px;line-height:24px;font-weight:400;font-style:normal;color:#5c5c5c;white-space:pre;letter-spacing:-0.55px;">Jowl</div></div>
<div style="left:1529.8799999999999px;top:426px;width:358.29px;height:512.00px;overflow:hidden"><div style="position:absolute;left:4.80px;top:425.70px;font-family:'Liberation Sans',sans-serif;font-size:24px;line-height:24px;font-weight:400;font-style:normal;color:#5c5c5c;white-space:pre;letter-spacing:-0.55px;">1</div></div>
<div style="left:2611.95px;top:426px;width:358.29px;height:512.00px;overflow:hidden"><div style="position:absolute;left:4.80px;top:425.70px;font-family:'Liberation Sans',sans-serif;font-size:24px;line-height:24px;font-weight:400;font-style:normal;color:#5c5c5c;white-space:pre;letter-spacing:-0.55px;">97.0</div></div>
<div style="left:445.59999999999997px;top:426px;width:360.50px;height:512.00px;overflow:hidden"><div style="position:absolute;left:8.20px;top:463.52px;font-family:'Liberation Sans',sans-serif;font-size:24px;line-height:24px;font-weight:400;font-style:normal;color:#5c5c5c;white-space:pre;letter-spacing:-0.55px;">Jowl - Skinless Meat 3mm Sized Shift 1</div></div>
<div style="left:808.5px;top:426px;width:358.29px;height:512.00px;overflow:hidden"><div style="position:absolute;left:4.80px;top:463.52px;font-family:'Liberation Sans',sans-serif;font-size:24px;line-height:24px;font-weight:400;font-style:normal;color:#5c5c5c;white-space:pre;letter-spacing:-0.55px;">Yes</div></div>
<div style="left:1169.19px;top:426px;width:358.29px;height:512.00px;overflow:hidden"><div style="position:absolute;left:4.80px;top:463.52px;font-family:'Liberation Sans',sans-serif;font-size:24px;line-height:24px;font-weight:400;font-style:normal;color:#5c5c5c;white-space:pre;letter-spacing:-0.55px;">Jowl</div></div>
<div style="left:1529.8799999999999px;top:426px;width:358.29px;height:512.00px;overflow:hidden"><div style="position:absolute;left:4.80px;top:463.52px;font-family:'Liberation Sans',sans-serif;font-size:24px;line-height:24px;font-weight:400;font-style:normal;color:#5c5c5c;white-space:pre;letter-spacing:-0.55px;">1</div></div>
<div style="left:2611.95px;top:426px;width:358.29px;height:512.00px;overflow:hidden"><div style="position:absolute;left:4.80px;top:463.52px;font-family:'Liberation Sans',sans-serif;font-size:24px;line-height:24px;font-weight:400;font-style:normal;color:#5c5c5c;white-space:pre;letter-spacing:-0.55px;">97.0</div></div>
<div style="left:445.59999999999997px;top:426px;width:360.50px;height:512.00px;overflow:hidden"><div style="position:absolute;left:8.20px;top:501.34px;font-family:'Liberation Sans',sans-serif;font-size:24px;line-height:24px;font-weight:400;font-style:normal;color:#5c5c5c;white-space:pre;letter-spacing:-0.55px;">Jowl - Skinless Meat 6mm Max Slices</div></div>
<div style="left:808.5px;top:426px;width:358.29px;height:512.00px;overflow:hidden"><div style="position:absolute;left:4.80px;top:501.34px;font-family:'Liberation Sans',sans-serif;font-size:24px;line-height:24px;font-weight:400;font-style:normal;color:#5c5c5c;white-space:pre;letter-spacing:-0.55px;">Yes</div></div>
<div style="left:1169.19px;top:426px;width:358.29px;height:512.00px;overflow:hidden"><div style="position:absolute;left:4.80px;top:501.34px;font-family:'Liberation Sans',sans-serif;font-size:24px;line-height:24px;font-weight:400;font-style:normal;color:#5c5c5c;white-space:pre;letter-spacing:-0.55px;">Jowl</div></div>
<div style="left:1529.8799999999999px;top:426px;width:358.29px;height:512.00px;overflow:hidden"><div style="position:absolute;left:4.80px;top:501.34px;font-family:'Liberation Sans',sans-serif;font-size:24px;line-height:24px;font-weight:400;font-style:normal;color:#5c5c5c;white-space:pre;letter-spacing:-0.55px;">1</div></div>
<div style="left:2611.95px;top:426px;width:358.29px;height:512.00px;overflow:hidden"><div style="position:absolute;left:4.80px;top:501.34px;font-family:'Liberation Sans',sans-serif;font-size:24px;line-height:24px;font-weight:400;font-style:normal;color:#5c5c5c;white-space:pre;letter-spacing:-0.55px;">97.0</div></div>
<div style="left:458px;top:955.8px;width:553.2px;height:404.70000000000005px;border:5px solid #d13b22"></div>
<div style="position:absolute;left:608.35px;top:966.28px;font-family:'Liberation Sans',sans-serif;font-size:24px;line-height:24px;font-weight:700;font-style:normal;color:#000;white-space:pre;letter-spacing:0px;">Active</div>
<div style="position:absolute;left:615.02px;top:1025.68px;font-family:'Liberation Sans',sans-serif;font-size:24px;line-height:24px;font-weight:700;font-style:normal;color:#000;white-space:pre;letter-spacing:0px;">Name</div>
<div style="position:absolute;left:521.70px;top:1085.08px;font-family:'Liberation Sans',sans-serif;font-size:24px;line-height:24px;font-weight:700;font-style:normal;color:#000;white-space:pre;letter-spacing:0px;transform:scaleX(0.9782);transform-origin:0 0;">Planning Type</div>
<div style="position:absolute;left:627.07px;top:1144.48px;font-family:'Liberation Sans',sans-serif;font-size:24px;line-height:24px;font-weight:700;font-style:normal;color:#000;white-space:pre;letter-spacing:0px;">Shift</div>
<div style="position:absolute;left:572.84px;top:1205.08px;font-family:'Liberation Sans',sans-serif;font-size:24px;line-height:24px;font-weight:700;font-style:normal;color:#000;white-space:pre;letter-spacing:0px;">Hog Type</div>
<div style="position:absolute;left:596.37px;top:1265.68px;font-family:'Liberation Sans',sans-serif;font-size:24px;line-height:24px;font-weight:700;font-style:normal;color:#000;white-space:pre;letter-spacing:0px;">Gender</div>
<div style="position:absolute;left:507.70px;top:1323.88px;font-family:'Liberation Sans',sans-serif;font-size:24px;line-height:24px;font-weight:700;font-style:normal;color:#000;white-space:pre;letter-spacing:0px;transform:scaleX(1.0038);transform-origin:0 0;">Merge Defaults</div>
<div style="left:688px;top:962.6px;width:28px;height:27.5px;border:1.9px solid #767676;border-radius:1px;background:#fff"></div>
<svg style="left:688px;top:962.6px" width="28" height="27"><path d="M4.8 14.2 L12.9 21.4 L22.6 5.8" fill="none" stroke="#141414" stroke-width="3.7"/></svg>
<div style="left:688px;top:1322px;width:28px;height:27.5px;border:1.9px solid #767676;border-radius:1px;background:#fff"></div>
<div style="left:684.4px;top:1010.3px;width:263.9px;height:50.700000000000045px;border:3px solid #e0463a;border-radius:3px;background:#f2b9c4;box-shadow:inset 0 0 0 1.5px #9c9c9c"></div>
<div style="left:684.4px;top:1070.4px;width:263.9px;height:51.09999999999991px;border:3px solid #e0463a;border-radius:3px;background:linear-gradient(#f0f0f0,#e5e5e5);box-shadow:inset 0 0 0 1.5px #a8a8a8"></div>
<svg style="left:922.3px;top:1087.75px" width="14" height="12"><path d="M2 3 L7 8.3 L12 3" fill="none" stroke="#555" stroke-width="2"/></svg>
<div style="left:686.2px;top:1133.8px;width:259.79999999999995px;height:45.0px;border:2px solid #acacac;background:linear-gradient(#efefef,#e3e3e3);box-shadow:inset 0 0 0 1px #f6f6f6"></div>
<svg style="left:920px;top:1148.1px" width="14" height="12"><path d="M2 3 L7 8.3 L12 3" fill="none" stroke="#555" stroke-width="2"/></svg>
<div style="position:absolute;left:700.20px;top:1143.28px;font-family:'Liberation Sans',sans-serif;font-size:24px;line-height:24px;font-weight:400;font-style:normal;color:#222;white-space:pre;letter-spacing:0px;">1</div>
<div style="left:686.2px;top:1194.4px;width:259.79999999999995px;height:44.299999999999955px;border:2px solid #acacac;background:linear-gradient(#efefef,#e3e3e3);box-shadow:inset 0 0 0 1px #f6f6f6"></div>
<svg style="left:920px;top:1208.3500000000001px" width="14" height="12"><path d="M2 3 L7 8.3 L12 3" fill="none" stroke="#555" stroke-width="2"/></svg>
<div style="left:686.2px;top:1254.5px;width:259.79999999999995px;height:44.299999999999955px;border:2px solid #acacac;background:linear-gradient(#efefef,#e3e3e3);box-shadow:inset 0 0 0 1px #f6f6f6"></div>
<svg style="left:920px;top:1268.45px" width="14" height="12"><path d="M2 3 L7 8.3 L12 3" fill="none" stroke="#555" stroke-width="2"/></svg>
<svg style="left:965px;top:1203.3px" width="26" height="26" fill="none" stroke="#f4c7bd" stroke-width="2.6"><path d="M2 2 L24 24 M24 2 L2 24"/></svg>
<svg style="left:965px;top:1263.4px" width="26" height="26" fill="none" stroke="#f4c7bd" stroke-width="2.6"><path d="M2 2 L24 24 M24 2 L2 24"/></svg>
<svg style="left:425px;top:1370px" width="150" height="45">
<defs><linearGradient id="gp" x1="0" y1="0" x2="1" y2="1"><stop offset="0" stop-color="#a6d89a"/><stop offset="1" stop-color="#4f9a3e"/></linearGradient>
<linearGradient id="gb" x1="0" y1="0" x2="1" y2="0"><stop offset="0" stop-color="#3f8fe0"/><stop offset="0.5" stop-color="#6ab4f2"/><stop offset="1" stop-color="#3d8ad8"/></linearGradient></defs>
<path d="M15.9 10 H24.9 V18.5 H33.3 V27.3 H24.9 V35.8 H15.9 V27.3 H7.5 V18.5 H15.9 Z" fill="url(#gp)" stroke="#2f6e24" stroke-width="1.6" stroke-linejoin="round"/>
<path d="M46.5 12 C52 17 60 27 67 36 M68.5 12.5 C61 19 53 27 48 36.5" stroke="#e4472a" stroke-width="3.4" fill="none" stroke-linecap="round"/>
<path d="M90.2 8.5 L104.2 22.5 H97 V35.5 Q97 38 94.5 38 H86 Q83.5 38 83.5 35.5 V22.5 H76.2 Z" fill="url(#gb)" stroke="#2a67b5" stroke-width="1.7" stroke-linejoin="round"/>
<path d="M126.5 38.8 L140.5 24.8 H133.3 V11.5 Q133.3 9 130.8 9 H122.2 Q119.7 9 119.7 11.5 V24.8 H112.5 Z" fill="url(#gb)" stroke="#2a67b5" stroke-width="1.7" stroke-linejoin="round"/>
</svg>
<div style="left:426.7px;top:1412px;width:599.3px;height:273.20000000000005px;border:1.6px solid #6f8fb5;background:#efefef"></div>
<div style="left:428.3px;top:1413.6px;width:596.1000000000001px;height:47.0px;background:linear-gradient(#ffffff 0%,#fbfbfc 40%,#f1f2f4 100%);border-bottom:1.5px solid #d8d8d8"></div>
<div style="left:523.5px;top:1413.6px;width:1.5px;height:45.40000000000009px;background:#dadada"></div>
<div style="left:773px;top:1413.6px;width:1.5px;height:45.40000000000009px;background:#dadada"></div>
<div style="position:absolute;left:439.30px;top:1427.68px;font-family:'Liberation Sans',sans-serif;font-size:24px;line-height:24px;font-weight:400;font-style:normal;color:#111;white-space:pre;letter-spacing:-0.55px;">Priority</div>
<div style="position:absolute;left:533.70px;top:1427.68px;font-family:'Liberation Sans',sans-serif;font-size:24px;line-height:24px;font-weight:400;font-style:normal;color:#111;white-space:pre;letter-spacing:-0.55px;">Cut Spec</div>
<div style="position:absolute;left:785.20px;top:1427.68px;font-family:'Liberation Sans',sans-serif;font-size:24px;line-height:24px;font-weight:400;font-style:normal;color:#111;white-space:pre;letter-spacing:-0.55px;">Mix Percent</div>
<svg style="left:438px;top:1657px" width="14" height="20"><path d="M11 2 L3.5 9.5 L11 17" fill="none" stroke="#c9c9c9" stroke-width="1.6"/></svg>
<svg style="left:1000px;top:1657px" width="14" height="20"><path d="M3 2 L10.5 9.5 L3 17" fill="none" stroke="#c9c9c9" stroke-width="1.6"/></svg>
<div style="position:absolute;left:1062.00px;top:1431.08px;font-family:'Liberation Sans',sans-serif;font-size:24px;line-height:24px;font-weight:700;font-style:normal;color:#000;white-space:pre;letter-spacing:0px;transform:scaleX(0.9393);transform-origin:0 0;">Cut Spec</div>
<div style="position:absolute;left:1057.20px;top:1491.28px;font-family:'Liberation Sans',sans-serif;font-size:24px;line-height:24px;font-weight:700;font-style:normal;color:#000;white-space:pre;letter-spacing:0px;transform:scaleX(0.9648);transform-origin:0 0;">Sub Type</div>
<div style="position:absolute;left:1090.70px;top:1550.88px;font-family:'Liberation Sans',sans-serif;font-size:24px;line-height:24px;font-weight:700;font-style:normal;color:#000;white-space:pre;letter-spacing:0px;transform:scaleX(1.0145);transform-origin:0 0;">Mix %</div>
<div style="position:absolute;left:1077.70px;top:1611.08px;font-family:'Liberation Sans',sans-serif;font-size:24px;line-height:24px;font-weight:700;font-style:normal;color:#000;white-space:pre;letter-spacing:0px;transform:scaleX(1.0081);transform-origin:0 0;">Default</div>
<div style="left:1166.5px;top:1420px;width:299.0px;height:45px;background:#efefef;border:1.6px solid #d6d6d6"></div>
<svg style="left:1440px;top:1436.5px" width="14" height="12"><path d="M2 3 L7 8.5 L12 3" fill="none" stroke="#c4c4c4" stroke-width="1.6"/></svg>
<div style="left:1166.5px;top:1480px;width:299.0px;height:44.799999999999955px;background:#efefef;border:1.6px solid #d6d6d6"></div>
<svg style="left:1440px;top:1496.4px" width="14" height="12"><path d="M2 3 L7 8.5 L12 3" fill="none" stroke="#c4c4c4" stroke-width="1.6"/></svg>
<div style="left:1166.5px;top:1539.8px;width:139.20000000000005px;height:45.200000000000045px;background:#fff;border:1.6px solid #cfd0d4"></div>
<div style="left:1166.5px;top:1600px;width:299.0px;height:45px;background:#efefef;border:1.6px solid #d6d6d6"></div>
<svg style="left:1440px;top:1616.5px" width="14" height="12"><path d="M2 3 L7 8.5 L12 3" fill="none" stroke="#c4c4c4" stroke-width="1.6"/></svg>
</body></html>
